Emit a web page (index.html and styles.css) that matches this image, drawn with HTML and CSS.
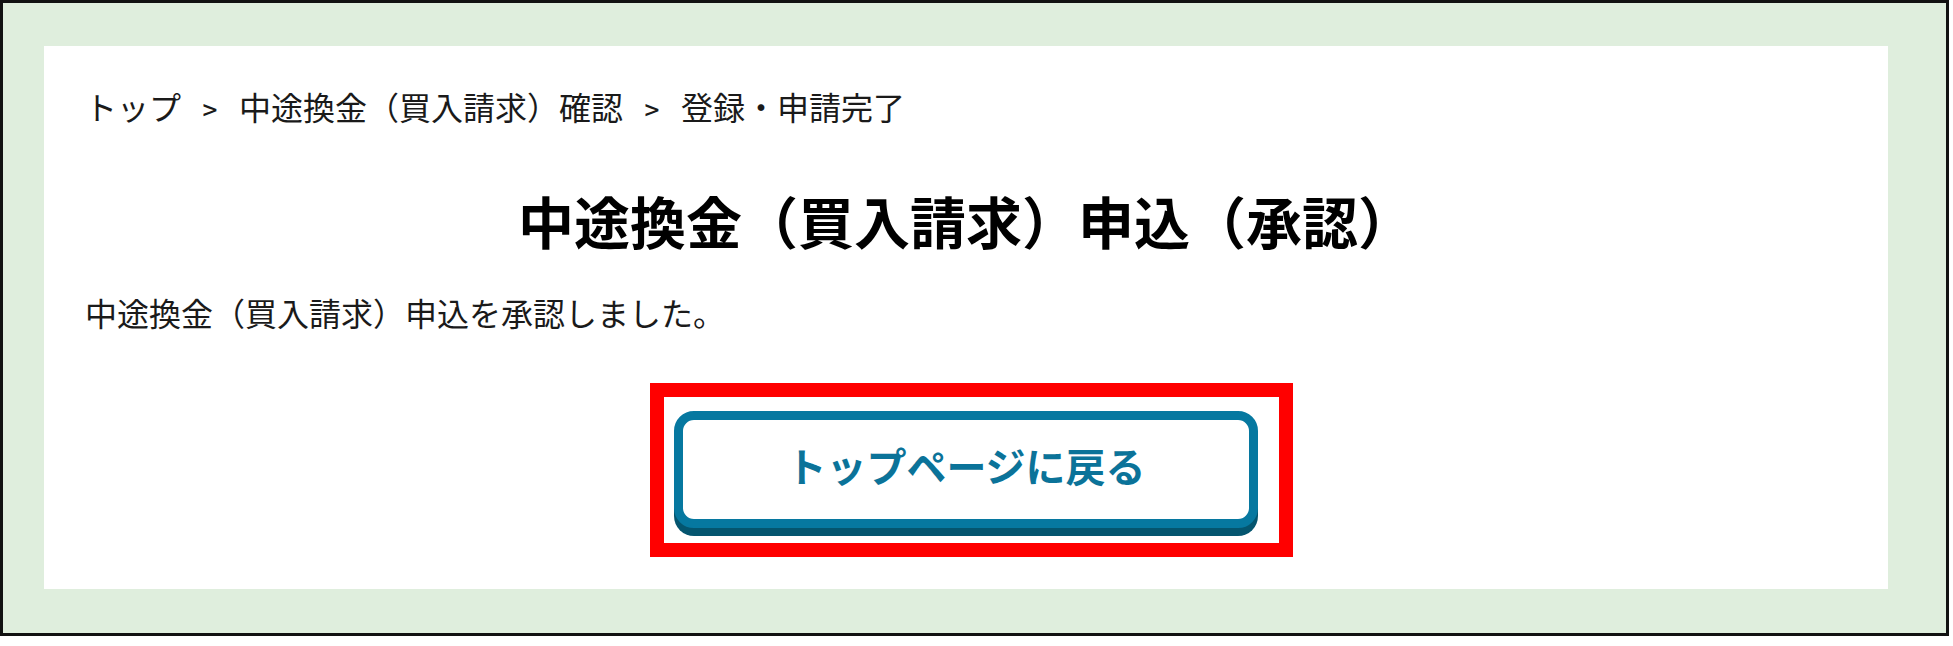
FILE: index.html
```html
<!DOCTYPE html>
<html lang="ja">
<head>
<meta charset="utf-8">
<title>中途換金（買入請求）申込（承認）</title>
<link rel="stylesheet" href="styles.css">
</head>
<body>
<div class="frame">
  <main class="panel">
    <nav class="breadcrumb">
      <span class="crumb">トップ</span><span class="sep">&gt;</span><span class="crumb">中途換金（買入請求）確認</span><span class="sep">&gt;</span><span class="crumb">登録・申請完了</span>
    </nav>
    <h1 class="title">中途換金（買入請求）申込（承認）</h1>
    <p class="message">中途換金（買入請求）申込を承認しました。</p>
    <div class="actions">
      <div class="highlight">
        <a class="back-button" href="#">トップページに戻る</a>
      </div>
    </div>
  </main>
</div>
</body>
</html>
```

FILE: styles.css
```css
html, body {
  margin: 0;
  padding: 0;
  background: #ffffff;
}

body {
  font-family: "Noto Sans CJK JP", "Noto Sans", sans-serif;
  color: #1a1a1a;
}

.frame {
  box-sizing: border-box;
  width: 1949px;
  height: 636px;
  border: 3px solid #111111;
  background: #dfeedd;
  padding: 43px 58px 44px 41px;
}

.panel {
  box-sizing: border-box;
  height: 543px;
  background: #ffffff;
  padding: 36px 41px 0 41px;
  display: flex;
  flex-direction: column;
}

.breadcrumb {
  font-size: 32px;
  line-height: 48px;
  white-space: nowrap;
}

.crumb {
  color: #1a1a1a;
}

.sep {
  display: inline-block;
  width: 58px;
  text-align: center;
  font-size: 26px;
  font-weight: 500;
  line-height: 1;
  color: #1a1a1a;
}

.title {
  margin: 48px 0 0 0;
  font-size: 56px;
  line-height: 84px;
  font-weight: 700;
  text-align: center;
  color: #000000;
}

.message {
  margin: 26px 0 0 0;
  font-size: 32px;
  line-height: 48px;
  color: #1a1a1a;
}

.actions {
  margin-top: 47px;
  display: flex;
  justify-content: center;
}

.highlight {
  margin-left: 11px;
  border: 14px solid #ff0000;
  padding: 14px 21px 7px 10px;
  background: #ffffff;
}

.back-button {
  box-sizing: border-box;
  display: flex;
  align-items: center;
  justify-content: center;
  width: 584px;
  height: 117px;
  border: 9px solid #0678a0;
  border-radius: 20px;
  box-shadow: 0 8px 0 #04556f;
  margin-bottom: 8px;
  background: #ffffff;
  color: #0b7399;
  font-size: 40px;
  font-weight: 700;
  text-decoration: none;
  padding-bottom: 10px;
}
```
